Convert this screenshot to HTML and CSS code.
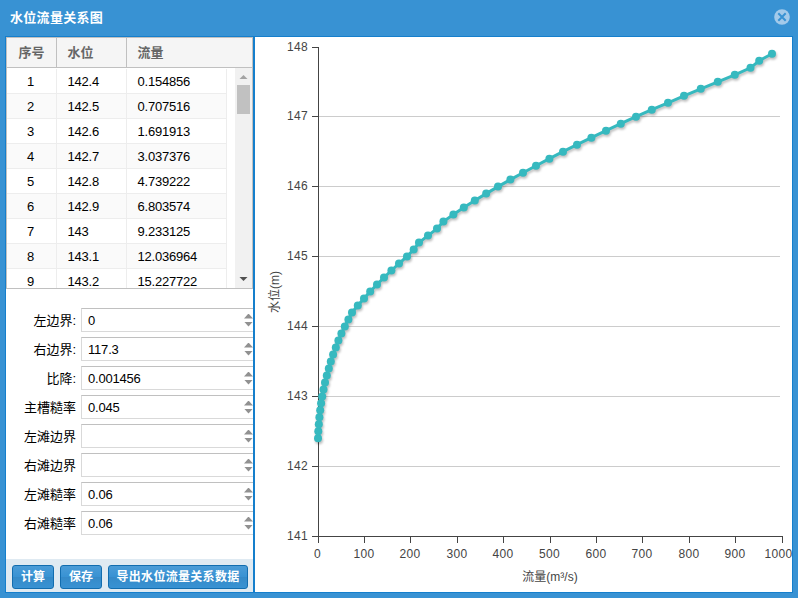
FILE: index.html
```html
<!DOCTYPE html>
<html lang="zh-CN">
<head>
    <meta charset="UTF-8">
    <title>水位流量关系图</title>
    <link rel="stylesheet" href="styles.css">
</head>
<body>
    <div class="window">
        <div class="window-header">
            <span class="window-title">水位流量关系图</span>
            <svg class="close" width="16" height="16" viewBox="0 0 16 16">
                <circle cx="8" cy="8" r="7.8" fill="#a3caea"/>
                <path d="M4.3 4.3L11.7 11.7M11.7 4.3L4.3 11.7" stroke="#3892d3" stroke-width="2"/>
            </svg>
        </div>

        <div class="window-body">
            <div class="side">
                <!-- 数据表格 -->
                <div class="grid">
                    <div class="grid-header">
                        <span>序号</span><span>水位</span><span>流量</span>
                    </div>
                    <div class="grid-body">
                        <div class="rows">
                            <div class="row"><span>1</span><span>142.4</span><span>0.154856</span></div>
                            <div class="row"><span>2</span><span>142.5</span><span>0.707516</span></div>
                            <div class="row"><span>3</span><span>142.6</span><span>1.691913</span></div>
                            <div class="row"><span>4</span><span>142.7</span><span>3.037376</span></div>
                            <div class="row"><span>5</span><span>142.8</span><span>4.739222</span></div>
                            <div class="row"><span>6</span><span>142.9</span><span>6.803574</span></div>
                            <div class="row"><span>7</span><span>143</span><span>9.233125</span></div>
                            <div class="row"><span>8</span><span>143.1</span><span>12.036964</span></div>
                            <div class="row"><span>9</span><span>143.2</span><span>15.227722</span></div>
                        </div>
                        <div class="scrollbar">
                            <svg width="17" height="17"><path d="M4.5 11L8.5 7L12.5 11Z" fill="#a3a3a3"/></svg>
                            <div class="thumb"></div>
                            <svg class="down" width="17" height="17"><path d="M4.5 6L8.5 10L12.5 6Z" fill="#505050"/></svg>
                        </div>
                    </div>
                </div>

                <!-- 参数 -->
                <div class="form">
                    <div class="field"><label>左边界:</label><div class="input">0<i class="spinner"></i></div></div>
                    <div class="field"><label>右边界:</label><div class="input">117.3<i class="spinner"></i></div></div>
                    <div class="field"><label>比降:</label><div class="input">0.001456<i class="spinner"></i></div></div>
                    <div class="field"><label>主槽糙率</label><div class="input">0.045<i class="spinner"></i></div></div>
                    <div class="field"><label>左滩边界</label><div class="input"><i class="spinner"></i></div></div>
                    <div class="field"><label>右滩边界</label><div class="input"><i class="spinner"></i></div></div>
                    <div class="field"><label>左滩糙率</label><div class="input">0.06<i class="spinner"></i></div></div>
                    <div class="field"><label>右滩糙率</label><div class="input">0.06<i class="spinner"></i></div></div>
                </div>

                <div class="toolbar">
                    <button class="btn-small">计算</button>
                    <button class="btn-small">保存</button>
                    <button class="btn-export">导出水位流量关系数据</button>
                </div>
            </div>

            <!-- 曲线图 -->
            <svg class="chart" width="537" height="555" viewBox="255 37 537 555">
                <defs>
                    <marker id="dot" viewBox="-5 -5 10 10" markerWidth="10" markerHeight="10" markerUnits="userSpaceOnUse">
                        <circle r="4" fill="#36b9bf"/>
                    </marker>
                </defs>
                <path class="gridlines" d="M318 116.5H780M318 186.5H780M318 256.5H780M318 326.5H780M318 396.5H780M318 466.5H780"/>
                <path class="axis" d="M318.5 47V537M312 536.5H783"/>
                <path class="axis" d="M312 47.5H318M312 116.5H318M312 186.5H318M312 256.5H318M312 326.5H318M312 396.5H318M312 466.5H318"/>
                <path class="axis" d="M318.5 537V543M364.5 537V543M410.5 537V543M457.5 537V543M503.5 537V543M550.5 537V543M596.5 537V543M642.5 537V543M689.5 537V543M735.5 537V543M782.5 537V543"/>

                <g class="labels y-labels">
                    <text x="308" y="51">148</text>
                    <text x="308" y="120">147</text>
                    <text x="308" y="190">146</text>
                    <text x="308" y="260">145</text>
                    <text x="308" y="330">144</text>
                    <text x="308" y="400">143</text>
                    <text x="308" y="470">142</text>
                    <text x="308" y="540">141</text>
                </g>
                <g class="labels x-labels">
                    <text x="317.5" y="558">0</text>
                    <text x="364" y="558">100</text>
                    <text x="410" y="558">200</text>
                    <text x="457" y="558">300</text>
                    <text x="503" y="558">400</text>
                    <text x="549.5" y="558">500</text>
                    <text x="596" y="558">600</text>
                    <text x="642" y="558">700</text>
                    <text x="689" y="558">800</text>
                    <text x="735" y="558">900</text>
                    <text x="778.5" y="558">1000</text>
                </g>
                <text class="axis-title" x="550" y="581">流量(m³/s)</text>
                <text class="axis-title" transform="translate(279 292) rotate(-90)">水位(m)</text>

                <g class="curve">
                    <polyline marker-start="url(#dot)" marker-mid="url(#dot)" marker-end="url(#dot)"
                        points="318,438.3 318.3,431.3 318.8,424.3 319.4,417.3 320.2,410.3 321.1,403.3 322.2,396.4 323.5,389.4
                        325,382.4 326.8,375.4 328.8,368.4 330.8,361.4 333.1,354.4 335.8,347.4 338.4,340.4 341.4,333.4
                        344.8,326.4 348.4,319.5 352,312.5 357.8,305.5 364,298.5 370.2,291.5 377,284.5 384,277.5
                        391.4,270.5 399,263.5 407,256.5 413.7,249.6 419,242.6 428,235.6 437,228.6 443.4,221.6
                        453.4,214.6 463.8,207.6 474.8,200.6 486.2,193.6 498,186.6 510.4,179.6 523,172.7 536,165.7
                        549.4,158.7 563,151.7 577,144.7 591.4,137.7 606,130.7 620.8,123.7 636,116.7 651.8,109.7
                        668,102.8 684,95.8 700.8,88.8 717.8,81.8 734.8,74.8 750.5,67.8 759.2,60.8 772,53.8"/>
                </g>
            </svg>
        </div>
    </div>
</body>
</html>
```
FILE: styles.css
```css
body {
    margin: 0;
    font-family: "Liberation Sans", "Noto Sans CJK SC", sans-serif;
    font-size: 13px;
    color: #000;
}

.window {
    box-sizing: border-box;
    width: 798px;
    height: 598px;
    padding: 0 5px 5px;
    background: #3892d3;
    overflow: hidden;
}

.window-header {
    display: flex;
    align-items: center;
    justify-content: space-between;
    height: 36px;
    padding: 0 3px 0 5px;
}

.window-title {
    color: #fff;
    font-weight: bold;
    line-height: 34px;
    letter-spacing: 0.3px;
}

.window-header .close {
    margin-top: -2px;
}

.window-body {
    display: flex;
    box-sizing: border-box;
    height: 557px;
    border: 1px solid #157fcc;
    background: #fff;
}

.side {
    display: flex;
    flex-direction: column;
    box-sizing: border-box;
    width: 249px;
    flex: none;
    border-right: 2px solid #157fcc;
}

/* 表格 */
.grid {
    box-sizing: border-box;
    height: 252px;
    border: 1px solid #c0c0c0;
    overflow: hidden;
}

.grid-header {
    display: flex;
    height: 29px;
    background: #f5f5f5;
    border-bottom: 1px solid #c0c0c0;
    color: #666;
    font-weight: bold;
    line-height: 29px;
}

.grid-header span,
.row span {
    box-sizing: border-box;
    padding-left: 10.5px;
}

.grid-header span {
    border-right: 1px solid #c0c0c0;
}

.grid-header span:last-child {
    border: 0;
}

.grid-header span:nth-child(1),
.row span:nth-child(1) {
    width: 50px;
    padding-left: 0;
    text-align: center;
}

.row span:nth-child(1) {
    padding-right: 2px;
}

.grid-header span:nth-child(2),
.row span:nth-child(2) {
    width: 70px;
}

.grid-body {
    display: flex;
    justify-content: space-between;
    height: 220px;
}

.rows {
    padding-top: 1px;
}

.row {
    display: flex;
    box-sizing: border-box;
    height: 25px;
    border-bottom: 1px solid #ededed;
    line-height: 25px;
    letter-spacing: -0.2px;
}

.row:nth-child(even) {
    background: #fafafa;
}

.row span {
    border-right: 1px solid #ededed;
}

.row span:nth-child(3) {
    width: 100px;
}

.scrollbar {
    display: flex;
    flex-direction: column;
    width: 17px;
    background: #f1f1f1;
}

.scrollbar svg {
    display: block;
}

.scrollbar .down {
    margin-top: auto;
}

.thumb {
    width: 13px;
    height: 29px;
    margin-left: 2px;
    background: #c1c1c1;
}

/* 表单 */
.form {
    display: flex;
    flex-direction: column;
    gap: 5px;
    flex: 1;
    padding-top: 19px;
}

.field {
    display: flex;
    height: 24px;
    line-height: 25px;
}

.field label {
    width: 70px;
    margin-right: 5px;
    text-align: right;
}

.input {
    display: flex;
    align-items: center;
    justify-content: space-between;
    box-sizing: border-box;
    flex: 1;
    padding-left: 6px;
    border: 1px solid #d9d9d9;
    border-top-color: #c0c0c0;
    border-right: 0;
    letter-spacing: -0.2px;
}

.spinner {
    display: flex;
    flex-direction: column;
    gap: 3px;
    margin-left: auto;
}

.spinner::before,
.spinner::after {
    content: "";
    width: 9px;
    height: 5px;
    background: #919191;
    clip-path: polygon(50% 0, 100% 100%, 0 100%);
}

.spinner::after {
    clip-path: polygon(0 0, 100% 0, 50% 100%);
}

.toolbar {
    display: flex;
    box-sizing: border-box;
    height: 33px;
    padding: 6px 5px 3px 6px;
    gap: 6px;
    background: #dfeaf2;
}

.toolbar button {
    box-sizing: border-box;
    height: 24px;
    padding: 0;
    border: 1px solid #126daf;
    border-radius: 3px;
    background: linear-gradient(#4b9cd7, #3892d3 50%, #358ac8 51%, #3892d3);
    color: #fff;
    font: bold 12px/22px "Liberation Sans", "Noto Sans CJK SC", sans-serif;
    white-space: nowrap;
    flex: none;
}

.toolbar .btn-small {
    width: 42px;
}

.toolbar .btn-export {
    width: 140px;
    letter-spacing: 0.3px;
}

/* 图表 */
.chart {
    display: block;
    flex: none;
}

.gridlines {
    stroke: #ccc;
    fill: none;
}

.axis {
    stroke: #444;
    fill: none;
}

.labels,
.axis-title {
    fill: #444;
    font-size: 12px;
}

.labels {
    letter-spacing: 0.33px;
}

.y-labels {
    text-anchor: end;
}

.x-labels,
.axis-title {
    text-anchor: middle;
}

.curve {
    filter: drop-shadow(1px 2px 1px rgba(0, 0, 0, 0.25));
}

.curve polyline {
    fill: none;
    stroke: #36b9bf;
    stroke-width: 3;
}
```
